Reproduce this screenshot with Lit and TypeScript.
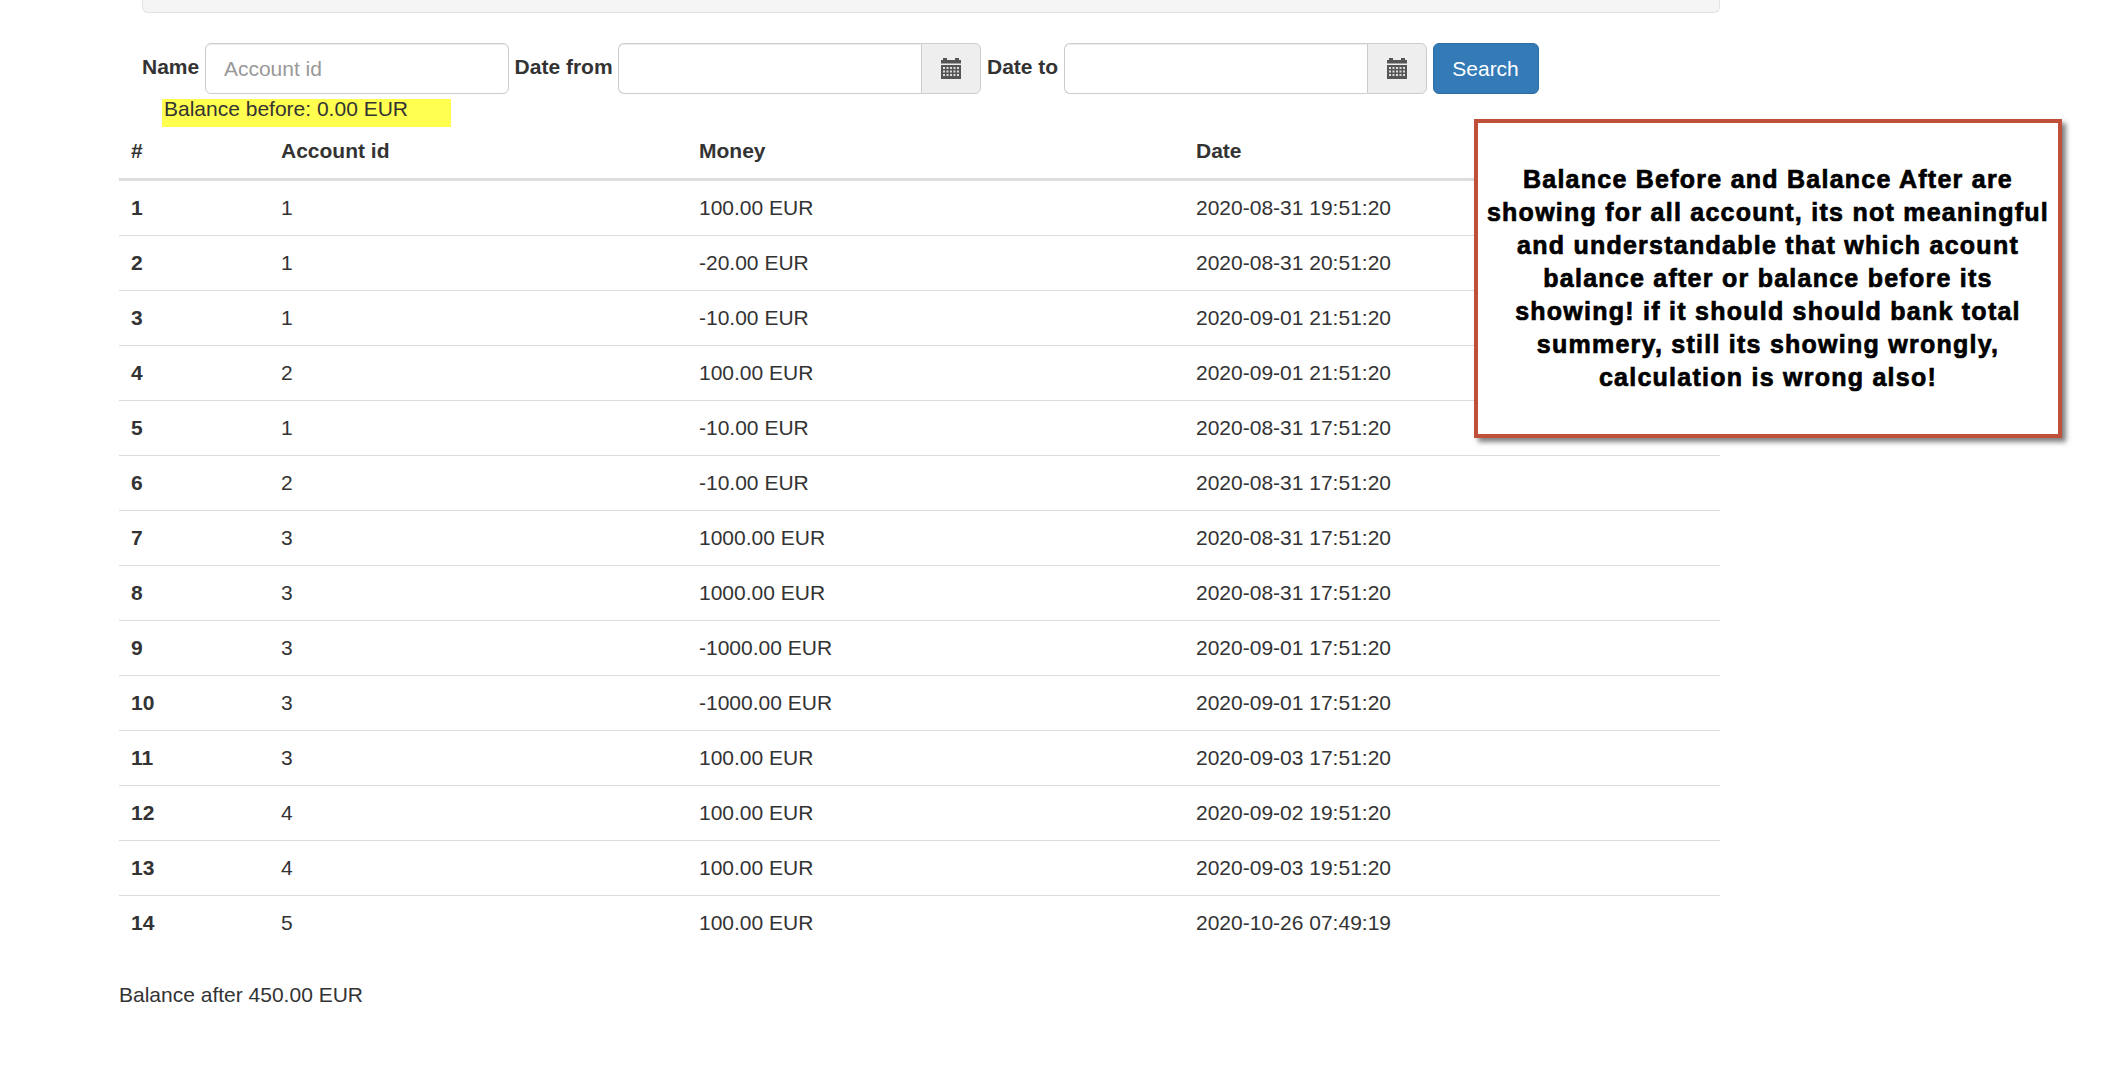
import { html, css, LitElement } from 'lit';
import { customElement } from 'lit/decorators.js';

const rows = [
  [1, 1, '100.00 EUR', '2020-08-31 19:51:20'],
  [2, 1, '-20.00 EUR', '2020-08-31 20:51:20'],
  [3, 1, '-10.00 EUR', '2020-09-01 21:51:20'],
  [4, 2, '100.00 EUR', '2020-09-01 21:51:20'],
  [5, 1, '-10.00 EUR', '2020-08-31 17:51:20'],
  [6, 2, '-10.00 EUR', '2020-08-31 17:51:20'],
  [7, 3, '1000.00 EUR', '2020-08-31 17:51:20'],
  [8, 3, '1000.00 EUR', '2020-08-31 17:51:20'],
  [9, 3, '-1000.00 EUR', '2020-09-01 17:51:20'],
  [10, 3, '-1000.00 EUR', '2020-09-01 17:51:20'],
  [11, 3, '100.00 EUR', '2020-09-03 17:51:20'],
  [12, 4, '100.00 EUR', '2020-09-02 19:51:20'],
  [13, 4, '100.00 EUR', '2020-09-03 19:51:20'],
  [14, 5, '100.00 EUR', '2020-10-26 07:49:19'],
];

const calendar = html`<svg class="cal" viewBox="0 0 20 21" width="20" height="21">
  <path fill="#555" d="M2 0h4v2h8V0h4v2h2v3.500H0V2h2zM0 7h20v14H0z" />
  <path
    fill="#ddd"
    d="M2 9h2v2H2zM5.500 9h2v2h-2zM9 9h2v2H9zM12.500 9h2v2h-2zM16 9h2v2h-2zM2 12.500h2v2H2zM5.500 12.500h2v2h-2zM9 12.500h2v2H9zM12.500 12.500h2v2h-2zM16 12.500h2v2h-2zM2 16h2v2H2zM5.500 16h2v2h-2zM9 16h2v2H9zM12.500 16h2v2h-2zM16 16h2v2h-2z"
  />
</svg>`;

@customElement('app-root')
export class AppRoot extends LitElement {
  private _dateField(width: number) {
    return html`<div class="date-group" style="width: ${width}px">
      <input class="control" type="text" />
      <span class="addon">${calendar}</span>
    </div>`;
  }

  render() {
    return html`
      <div class="wrap">
        <div class="top-panel"></div>
        <form class="filter">
          <label>Name</label>
          <input class="control name" type="text" placeholder="Account id" />
          <label>Date from</label>
          ${this._dateField(363)}
          <label>Date to</label>
          ${this._dateField(363)}
          <button type="button" class="search">Search</button>
        </form>
        <div class="balance-before"><span>Balance before: 0.00 EUR</span></div>
        <table>
          <colgroup>
            <col class="c1" />
            <col class="c2" />
            <col class="c3" />
            <col />
          </colgroup>
          <thead>
            <tr>
              <th>#</th>
              <th>Account id</th>
              <th>Money</th>
              <th>Date</th>
            </tr>
          </thead>
          <tbody>
            ${rows.map(
              (r) => html`<tr>
                <th>${r[0]}</th>
                <td>${r[1]}</td>
                <td>${r[2]}</td>
                <td>${r[3]}</td>
              </tr>`
            )}
          </tbody>
        </table>
        <div class="balance-after">Balance after 450.00 EUR</div>
      </div>
      <div class="note">
        <p>
          Balance Before and Balance After are<br />
          showing for all account, its not meaningful<br />
          and understandable that which acount<br />
          balance after or balance before its<br />
          showing! if it should should bank total<br />
          summery, still its showing wrongly,<br />
          calculation is wrong also!
        </p>
      </div>
    `;
  }

  static styles = css`
    :host {
      display: block;
      position: relative;
      min-height: 1087px;
      background: #fff;
      color: #333;
      font-family: 'Liberation Sans', Arial, sans-serif;
      font-size: 21px;
      line-height: 30px;
    }

    .wrap {
      width: 1601px;
      margin-left: 119px;
    }

    .top-panel {
      height: 13px;
      margin-left: 23px;
      box-sizing: border-box;
      background: #f5f5f5;
      border: 1px solid #e3e3e3;
      border-top: 0;
      border-radius: 0 0 6px 6px;
    }

    .filter {
      display: flex;
      align-items: center;
      gap: 5.7px;
      margin: 30px 0 0 23px;
      height: 51px;
    }

    label {
      font-weight: 700;
      padding-bottom: 4px;
    }

    .control {
      box-sizing: border-box;
      height: 51px;
      padding: 9px 18px;
      font: inherit;
      color: #555;
      background: #fff;
      border: 1px solid #ccc;
      border-radius: 6px;
      box-shadow: inset 0 1px 1px rgb(0 0 0 / 0.075);
      outline: none;
    }

    .control::placeholder {
      color: #999;
    }

    .name {
      width: 304px;
    }

    .date-group {
      display: flex;
    }

    .date-group .control {
      flex: 1;
      min-width: 0;
      border-radius: 6px 0 0 6px;
      border-right: 0;
    }

    .addon {
      box-sizing: border-box;
      display: flex;
      align-items: center;
      justify-content: center;
      width: 60px;
      height: 51px;
      background: #eee;
      border: 1px solid #ccc;
      border-radius: 0 6px 6px 0;
    }

    .cal {
      display: block;
    }

    .search {
      box-sizing: border-box;
      height: 51px;
      width: 106px;
      padding: 0;
      font: inherit;
      color: #fff;
      background: #337ab7;
      border: 1px solid #2e6da4;
      border-radius: 6px;
    }

    .balance-before {
      position: relative;
      height: 30px;
      padding-left: 45px;
      z-index: 0;
    }

    .balance-before::before {
      content: '';
      position: absolute;
      z-index: -1;
      left: 43px;
      top: 5px;
      width: 289px;
      height: 28px;
      background: #ffff50;
    }

    table {
      width: 100%;
      table-layout: fixed;
      border-collapse: collapse;
      margin-bottom: 30px;
    }

    .c1 {
      width: 150px;
    }

    .c2 {
      width: 418px;
    }

    .c3 {
      width: 497px;
    }

    th,
    td {
      padding: 12px;
      text-align: left;
      vertical-align: top;
    }

    thead th {
      padding-bottom: 12px;
      border-bottom: 3px solid #ddd;
    }

    tbody tr + tr th,
    tbody tr + tr td {
      border-top: 1px solid #ddd;
    }

    .note {
      position: absolute;
      left: 1474px;
      top: 119px;
      box-sizing: border-box;
      width: 588px;
      height: 319px;
      display: flex;
      align-items: center;
      justify-content: center;
      background: #fff;
      border: 4px solid #c0503a;
      box-shadow: 4px 4px 5px rgb(0 0 0 / 0.5);
    }

    .note p {
      margin: 0;
      text-align: center;
      white-space: nowrap;
      color: #000;
      font-size: 25px;
      line-height: 33px;
      font-weight: 700;
      letter-spacing: 1.25px;
      -webkit-text-stroke: 0.7px #000;
    }
  `;
}

declare global {
  interface HTMLElementTagNameMap {
    'app-root': AppRoot;
  }
}
